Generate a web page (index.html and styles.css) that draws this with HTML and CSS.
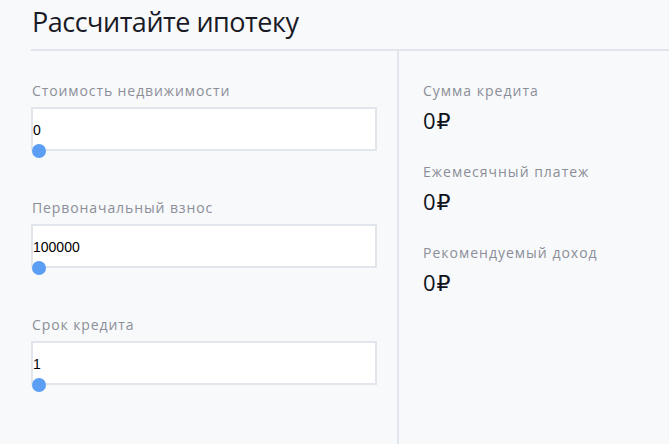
FILE: index.html
```html
<!DOCTYPE html>
<html lang="ru">
<head>
<meta charset="utf-8">
<title>Рассчитайте ипотеку</title>
<link rel="stylesheet" href="styles.css">
</head>
<body>
<div class="page">
  <header class="header">
    <h1 class="title">Рассчитайте ипотеку</h1>
  </header>
  <main class="main">
    <section class="inputs">
      <div class="field">
        <label class="field-label">Стоимость недвижимости</label>
        <div class="field-box">
          <input class="field-text" type="text" value="0">
          <input class="field-range" type="range" min="0" max="100" value="0">
        </div>
      </div>
      <div class="field">
        <label class="field-label">Первоначальный взнос</label>
        <div class="field-box">
          <input class="field-text" type="text" value="100000">
          <input class="field-range" type="range" min="0" max="100" value="0">
        </div>
      </div>
      <div class="field">
        <label class="field-label">Срок кредита</label>
        <div class="field-box">
          <input class="field-text" type="text" value="1">
          <input class="field-range" type="range" min="0" max="100" value="0">
        </div>
      </div>
    </section>
    <section class="results">
      <div class="result">
        <div class="result-label">Сумма кредита</div>
        <div class="result-value">0₽</div>
      </div>
      <div class="result">
        <div class="result-label">Ежемесячный платеж</div>
        <div class="result-value">0₽</div>
      </div>
      <div class="result">
        <div class="result-label">Рекомендуемый доход</div>
        <div class="result-value">0₽</div>
      </div>
    </section>
  </main>
</div>
</body>
</html>
```
FILE: styles.css
```css
html, body {
  margin: 0;
  padding: 0;
  height: 100%;
}
body {
  background: #f8f9fb;
  font-family: "Open Sans", "DejaVu Sans", sans-serif;
  overflow: hidden;
}
.page {
  padding-left: 31px;
  height: 100%;
  display: flex;
  flex-direction: column;
  box-sizing: border-box;
}
.header {
  border-bottom: 2px solid #e3e5ed;
  padding: 3px 0 9px 1px;
}
.title {
  margin: 0;
  font-size: 27px;
  font-weight: 400;
  line-height: 37px;
  letter-spacing: -0.5px;
  color: #1a1b26;
}
.main {
  flex: 1;
  display: flex;
}
.inputs {
  width: 366px;
  border-right: 2px solid #e3e5ed;
  padding-top: 30px;
  display: flex;
  flex-direction: column;
  gap: 47px;
}
.field-label {
  display: block;
  font-size: 14px;
  line-height: 20px;
  letter-spacing: 0.9px;
  color: #8b8e98;
  padding-left: 1px;
  margin-bottom: 6px;
}
.field-box {
  width: 346px;
  height: 44px;
  box-sizing: border-box;
  border: 2px solid #e3e5ec;
  background: #fff;
  padding-top: 13px;
  display: flex;
  flex-direction: column;
}
.field-text {
  border: 0;
  padding: 0;
  margin: 0;
  height: 15px;
  font-family: "Liberation Sans", Arial, sans-serif;
  font-size: 14px;
  color: #000;
  background: transparent;
  outline: none;
}
.field-range {
  -webkit-appearance: none;
  appearance: none;
  margin: 7px 0 0 -1px;
  padding: 0;
  width: 345px;
  height: 14px;
  background: transparent;
}
.field-range::-webkit-slider-runnable-track {
  height: 14px;
  background: transparent;
}
.field-range::-webkit-slider-thumb {
  -webkit-appearance: none;
  appearance: none;
  width: 14px;
  height: 14px;
  border-radius: 50%;
  background: #5b9ef4;
  border: 0;
}
.results {
  padding: 30px 0 0 24px;
  display: flex;
  flex-direction: column;
  gap: 28px;
}
.result-label {
  font-size: 14px;
  line-height: 20px;
  letter-spacing: 1px;
  color: #8b8e98;
  margin-bottom: 5px;
}
.result-value {
  font-size: 22px;
  line-height: 28px;
  letter-spacing: 1px;
  color: #0f1320;
}
```
